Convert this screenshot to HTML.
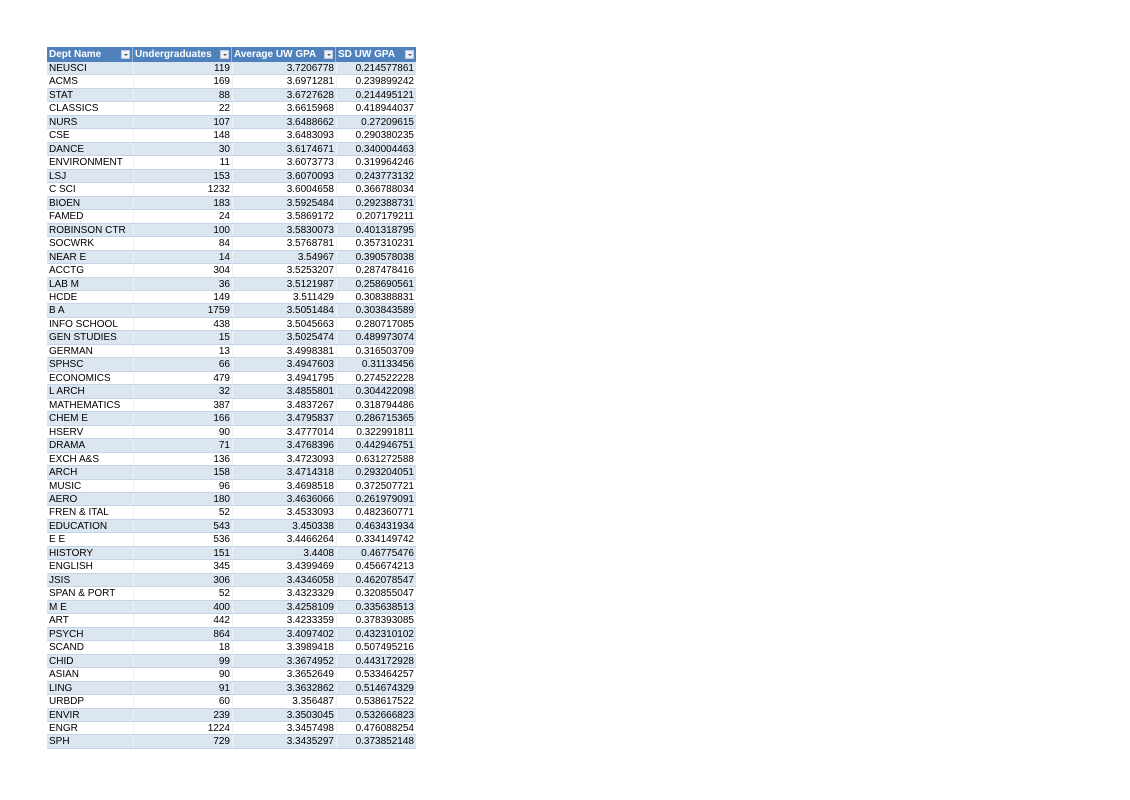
<!DOCTYPE html>
<html><head><meta charset="utf-8"><style>
html,body{margin:0;padding:0;background:#fff;width:1130px;height:800px;overflow:hidden}
#t{position:absolute;left:47px;top:47px;width:369px;font-family:"Liberation Sans",sans-serif;font-size:10px;color:#000}
.r{display:flex;height:13.48px;box-sizing:border-box;border-bottom:1px solid #c5d4e6}
.r div{box-sizing:border-box;padding:1px 2px 0;line-height:12.5px;white-space:nowrap;overflow:hidden}
.r div+div{text-align:right;border-left:1px solid #eef2f8}
.c1{width:86px}.c2{width:99px}.c3{width:104px}.c4{width:80px}
.h{display:flex;height:15px;background:#4f81bd;color:#fff;font-weight:bold;font-size:10px}
.h div{position:relative;box-sizing:border-box;padding:0 2px;line-height:15px;white-space:nowrap;border-right:1px solid #95b3d7}
.h div:last-child{border-right:none}
.b{position:absolute;right:2px;top:3px;width:9px;height:9px;background:#eef2f8;border:1px solid #c0c8d8;box-sizing:border-box}
.b:after{content:"";position:absolute;left:2px;top:3px;border-left:2px solid transparent;border-right:2px solid transparent;border-top:2px solid #555}
#rows .r:nth-child(odd){background:#dce6f1}#rows .r:nth-child(even){background:#fff}
</style></head><body>
<div id="t">
<div class="h"><div class="c1">Dept Name<span class="b"></span></div><div class="c2">Undergraduates<span class="b"></span></div><div class="c3">Average UW GPA<span class="b"></span></div><div class="c4">SD UW GPA<span class="b"></span></div></div>
<div id="rows">
<div class="r"><div class="c1">NEUSCI</div><div class="c2">119</div><div class="c3">3.7206778</div><div class="c4">0.214577861</div></div>
<div class="r"><div class="c1">ACMS</div><div class="c2">169</div><div class="c3">3.6971281</div><div class="c4">0.239899242</div></div>
<div class="r"><div class="c1">STAT</div><div class="c2">88</div><div class="c3">3.6727628</div><div class="c4">0.214495121</div></div>
<div class="r"><div class="c1">CLASSICS</div><div class="c2">22</div><div class="c3">3.6615968</div><div class="c4">0.418944037</div></div>
<div class="r"><div class="c1">NURS</div><div class="c2">107</div><div class="c3">3.6488662</div><div class="c4">0.27209615</div></div>
<div class="r"><div class="c1">CSE</div><div class="c2">148</div><div class="c3">3.6483093</div><div class="c4">0.290380235</div></div>
<div class="r"><div class="c1">DANCE</div><div class="c2">30</div><div class="c3">3.6174671</div><div class="c4">0.340004463</div></div>
<div class="r"><div class="c1">ENVIRONMENT</div><div class="c2">11</div><div class="c3">3.6073773</div><div class="c4">0.319964246</div></div>
<div class="r"><div class="c1">LSJ</div><div class="c2">153</div><div class="c3">3.6070093</div><div class="c4">0.243773132</div></div>
<div class="r"><div class="c1">C SCI</div><div class="c2">1232</div><div class="c3">3.6004658</div><div class="c4">0.366788034</div></div>
<div class="r"><div class="c1">BIOEN</div><div class="c2">183</div><div class="c3">3.5925484</div><div class="c4">0.292388731</div></div>
<div class="r"><div class="c1">FAMED</div><div class="c2">24</div><div class="c3">3.5869172</div><div class="c4">0.207179211</div></div>
<div class="r"><div class="c1">ROBINSON CTR</div><div class="c2">100</div><div class="c3">3.5830073</div><div class="c4">0.401318795</div></div>
<div class="r"><div class="c1">SOCWRK</div><div class="c2">84</div><div class="c3">3.5768781</div><div class="c4">0.357310231</div></div>
<div class="r"><div class="c1">NEAR E</div><div class="c2">14</div><div class="c3">3.54967</div><div class="c4">0.390578038</div></div>
<div class="r"><div class="c1">ACCTG</div><div class="c2">304</div><div class="c3">3.5253207</div><div class="c4">0.287478416</div></div>
<div class="r"><div class="c1">LAB M</div><div class="c2">36</div><div class="c3">3.5121987</div><div class="c4">0.258690561</div></div>
<div class="r"><div class="c1">HCDE</div><div class="c2">149</div><div class="c3">3.511429</div><div class="c4">0.308388831</div></div>
<div class="r"><div class="c1">B A</div><div class="c2">1759</div><div class="c3">3.5051484</div><div class="c4">0.303843589</div></div>
<div class="r"><div class="c1">INFO SCHOOL</div><div class="c2">438</div><div class="c3">3.5045663</div><div class="c4">0.280717085</div></div>
<div class="r"><div class="c1">GEN STUDIES</div><div class="c2">15</div><div class="c3">3.5025474</div><div class="c4">0.489973074</div></div>
<div class="r"><div class="c1">GERMAN</div><div class="c2">13</div><div class="c3">3.4998381</div><div class="c4">0.316503709</div></div>
<div class="r"><div class="c1">SPHSC</div><div class="c2">66</div><div class="c3">3.4947603</div><div class="c4">0.31133456</div></div>
<div class="r"><div class="c1">ECONOMICS</div><div class="c2">479</div><div class="c3">3.4941795</div><div class="c4">0.274522228</div></div>
<div class="r"><div class="c1">L ARCH</div><div class="c2">32</div><div class="c3">3.4855801</div><div class="c4">0.304422098</div></div>
<div class="r"><div class="c1">MATHEMATICS</div><div class="c2">387</div><div class="c3">3.4837267</div><div class="c4">0.318794486</div></div>
<div class="r"><div class="c1">CHEM E</div><div class="c2">166</div><div class="c3">3.4795837</div><div class="c4">0.286715365</div></div>
<div class="r"><div class="c1">HSERV</div><div class="c2">90</div><div class="c3">3.4777014</div><div class="c4">0.322991811</div></div>
<div class="r"><div class="c1">DRAMA</div><div class="c2">71</div><div class="c3">3.4768396</div><div class="c4">0.442946751</div></div>
<div class="r"><div class="c1">EXCH A&amp;S</div><div class="c2">136</div><div class="c3">3.4723093</div><div class="c4">0.631272588</div></div>
<div class="r"><div class="c1">ARCH</div><div class="c2">158</div><div class="c3">3.4714318</div><div class="c4">0.293204051</div></div>
<div class="r"><div class="c1">MUSIC</div><div class="c2">96</div><div class="c3">3.4698518</div><div class="c4">0.372507721</div></div>
<div class="r"><div class="c1">AERO</div><div class="c2">180</div><div class="c3">3.4636066</div><div class="c4">0.261979091</div></div>
<div class="r"><div class="c1">FREN &amp; ITAL</div><div class="c2">52</div><div class="c3">3.4533093</div><div class="c4">0.482360771</div></div>
<div class="r"><div class="c1">EDUCATION</div><div class="c2">543</div><div class="c3">3.450338</div><div class="c4">0.463431934</div></div>
<div class="r"><div class="c1">E E</div><div class="c2">536</div><div class="c3">3.4466264</div><div class="c4">0.334149742</div></div>
<div class="r"><div class="c1">HISTORY</div><div class="c2">151</div><div class="c3">3.4408</div><div class="c4">0.46775476</div></div>
<div class="r"><div class="c1">ENGLISH</div><div class="c2">345</div><div class="c3">3.4399469</div><div class="c4">0.456674213</div></div>
<div class="r"><div class="c1">JSIS</div><div class="c2">306</div><div class="c3">3.4346058</div><div class="c4">0.462078547</div></div>
<div class="r"><div class="c1">SPAN &amp; PORT</div><div class="c2">52</div><div class="c3">3.4323329</div><div class="c4">0.320855047</div></div>
<div class="r"><div class="c1">M E</div><div class="c2">400</div><div class="c3">3.4258109</div><div class="c4">0.335638513</div></div>
<div class="r"><div class="c1">ART</div><div class="c2">442</div><div class="c3">3.4233359</div><div class="c4">0.378393085</div></div>
<div class="r"><div class="c1">PSYCH</div><div class="c2">864</div><div class="c3">3.4097402</div><div class="c4">0.432310102</div></div>
<div class="r"><div class="c1">SCAND</div><div class="c2">18</div><div class="c3">3.3989418</div><div class="c4">0.507495216</div></div>
<div class="r"><div class="c1">CHID</div><div class="c2">99</div><div class="c3">3.3674952</div><div class="c4">0.443172928</div></div>
<div class="r"><div class="c1">ASIAN</div><div class="c2">90</div><div class="c3">3.3652649</div><div class="c4">0.533464257</div></div>
<div class="r"><div class="c1">LING</div><div class="c2">91</div><div class="c3">3.3632862</div><div class="c4">0.514674329</div></div>
<div class="r"><div class="c1">URBDP</div><div class="c2">60</div><div class="c3">3.356487</div><div class="c4">0.538617522</div></div>
<div class="r"><div class="c1">ENVIR</div><div class="c2">239</div><div class="c3">3.3503045</div><div class="c4">0.532666823</div></div>
<div class="r"><div class="c1">ENGR</div><div class="c2">1224</div><div class="c3">3.3457498</div><div class="c4">0.476088254</div></div>
<div class="r"><div class="c1">SPH</div><div class="c2">729</div><div class="c3">3.3435297</div><div class="c4">0.373852148</div></div>
</div>
</div>
</body></html>
